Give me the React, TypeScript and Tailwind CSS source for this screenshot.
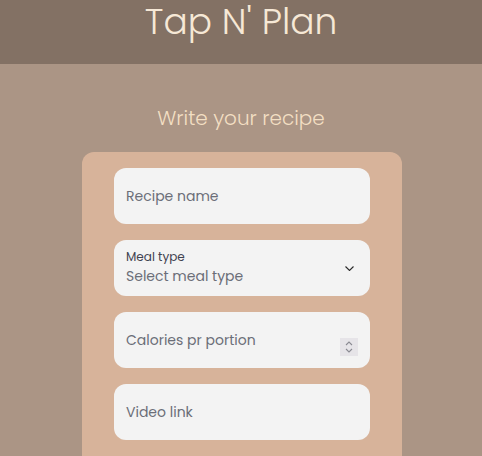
import React from 'react'

const font = { fontFamily: '"Poppins", "DejaVu Sans", sans-serif' }

const Field = ({ label }: { label: string }) => (
  <div className="flex h-14 items-center rounded-xl bg-[#f3f3f3] px-3 text-[14px] text-[#6b6e78]">
    {label}
  </div>
)

const App = () => {
  return (
    <div className="min-h-screen bg-[#ab9585]" style={font}>
      <header className="flex h-16 justify-center bg-[#837164]">
        <h1 className="pt-[1px] text-[36px] font-light leading-[42px] text-[#f6e8d6]">Tap N' Plan</h1>
      </header>
      <main className="flex flex-col items-center pt-[40px]">
        <h2 className="text-[20px] font-light leading-7 text-[#f3dfc3]">Write your recipe</h2>
        <div className="ml-[2px] mt-[20px] w-[320px] rounded-xl bg-[#d7b39a] px-8 pb-8 pt-4">
          <div className="flex flex-col gap-4">
            <Field label="Recipe name" />
            <div className="flex h-14 items-center justify-between rounded-xl bg-[#f3f3f3] px-3">
              <div className="flex flex-col">
                <span className="-mt-[1px] text-[12px] leading-4 text-[#3f4250]">Meal type</span>
                <span className="mt-[1px] text-[14px] leading-5 text-[#6b6e78]">Select meal type</span>
              </div>
              <svg width="9" height="5" viewBox="0 0 9 5" className="mr-[4px]">
                <path d="M0.5 0.5l4 4 4-4" fill="none" stroke="#2a2a2a" strokeWidth="1.1" />
              </svg>
            </div>
            <div className="flex h-14 items-center justify-between rounded-xl bg-[#f3f3f3] pl-3 pr-[12px]">
              <span className="text-[14px] text-[#6b6e78]">Calories pr portion</span>
              <div className="mt-[13px] flex h-[18px] w-[18px] flex-col items-center justify-center gap-[2px] bg-[#e6e4e8]">
                <svg width="8" height="5" viewBox="0 0 8 5">
                  <path d="M1 4l3-3 3 3" fill="none" stroke="#8a8a92" strokeWidth="1.1" />
                </svg>
                <svg width="8" height="5" viewBox="0 0 8 5">
                  <path d="M1 1l3 3 3-3" fill="none" stroke="#8a8a92" strokeWidth="1.1" />
                </svg>
              </div>
            </div>
            <Field label="Video link" />
          </div>
        </div>
      </main>
    </div>
  )
}

export default App
